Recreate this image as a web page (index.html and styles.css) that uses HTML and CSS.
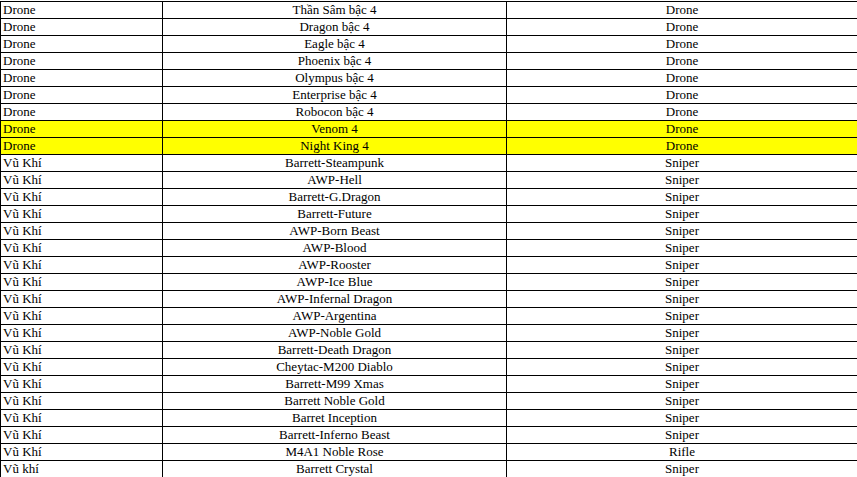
FILE: index.html
```html
<!DOCTYPE html>
<html>
<head>
<meta charset="utf-8">
<link rel="stylesheet" href="styles.css">
</head>
<body>
<div class="wrap">
<table class="sheet">
<colgroup><col class="c1"><col class="c2"><col class="c3"></colgroup>
<tbody>
<tr><td>Drone</td><td class="mid">Thần Sâm bậc 4</td><td class="mid">Drone</td></tr>
<tr><td>Drone</td><td class="mid">Dragon bậc 4</td><td class="mid">Drone</td></tr>
<tr><td>Drone</td><td class="mid">Eagle bậc 4</td><td class="mid">Drone</td></tr>
<tr><td>Drone</td><td class="mid">Phoenix bậc 4</td><td class="mid">Drone</td></tr>
<tr><td>Drone</td><td class="mid">Olympus bậc 4</td><td class="mid">Drone</td></tr>
<tr><td>Drone</td><td class="mid">Enterprise bậc 4</td><td class="mid">Drone</td></tr>
<tr><td>Drone</td><td class="mid">Robocon bậc 4</td><td class="mid">Drone</td></tr>
<tr class="hl"><td>Drone</td><td class="mid">Venom 4</td><td class="mid">Drone</td></tr>
<tr class="hl"><td>Drone</td><td class="mid">Night King 4</td><td class="mid">Drone</td></tr>
<tr><td>Vũ Khí</td><td class="mid">Barrett-Steampunk</td><td class="mid">Sniper</td></tr>
<tr><td>Vũ Khí</td><td class="mid">AWP-Hell</td><td class="mid">Sniper</td></tr>
<tr><td>Vũ Khí</td><td class="mid">Barrett-G.Dragon</td><td class="mid">Sniper</td></tr>
<tr><td>Vũ Khí</td><td class="mid">Barrett-Future</td><td class="mid">Sniper</td></tr>
<tr><td>Vũ Khí</td><td class="mid">AWP-Born Beast</td><td class="mid">Sniper</td></tr>
<tr><td>Vũ Khí</td><td class="mid">AWP-Blood</td><td class="mid">Sniper</td></tr>
<tr><td>Vũ Khí</td><td class="mid">AWP-Rooster</td><td class="mid">Sniper</td></tr>
<tr><td>Vũ Khí</td><td class="mid">AWP-Ice Blue</td><td class="mid">Sniper</td></tr>
<tr><td>Vũ Khí</td><td class="mid">AWP-Infernal Dragon</td><td class="mid">Sniper</td></tr>
<tr><td>Vũ Khí</td><td class="mid">AWP-Argentina</td><td class="mid">Sniper</td></tr>
<tr><td>Vũ Khí</td><td class="mid">AWP-Noble Gold</td><td class="mid">Sniper</td></tr>
<tr><td>Vũ Khí</td><td class="mid">Barrett-Death Dragon</td><td class="mid">Sniper</td></tr>
<tr><td>Vũ Khí</td><td class="mid">Cheytac-M200 Diablo</td><td class="mid">Sniper</td></tr>
<tr><td>Vũ Khí</td><td class="mid">Barrett-M99 Xmas</td><td class="mid">Sniper</td></tr>
<tr><td>Vũ Khí</td><td class="mid">Barrett Noble Gold</td><td class="mid">Sniper</td></tr>
<tr><td>Vũ Khí</td><td class="mid">Barret Inception</td><td class="mid">Sniper</td></tr>
<tr><td>Vũ Khí</td><td class="mid">Barrett-Inferno Beast</td><td class="mid">Sniper</td></tr>
<tr><td>Vũ Khí</td><td class="mid">M4A1 Noble Rose</td><td class="mid">Rifle</td></tr>
<tr><td>Vũ khí</td><td class="mid">Barrett Crystal</td><td class="mid">Sniper</td></tr>
</tbody>
</table>
</div>
</body>
</html>
```

FILE: styles.css
```css
html, body {
  margin: 0;
  padding: 0;
  background: #ffffff;
}
.wrap {
  padding-top: 1px;
}
.sheet {
  border-collapse: collapse;
  width: 857px;
  table-layout: fixed;
  font-family: "Liberation Serif", "Times New Roman", serif;
  font-size: 13px;
  color: #000000;
}
.c1 { width: 162px; }
.c2 { width: 344px; }
.c3 { width: 351px; }
.sheet td {
  border: 1px solid #000000;
  padding: 0 2px;
  height: 16px;
  line-height: 16px;
  white-space: nowrap;
  overflow: hidden;
}
.sheet td.mid {
  text-align: center;
}
.sheet tr.hl td {
  background: #ffff00;
}
```
